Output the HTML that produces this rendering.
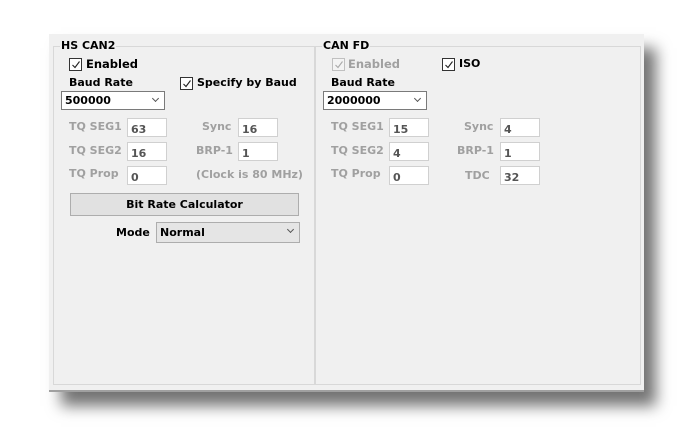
<!DOCTYPE html>
<html><head><style>
body{margin:0;width:682px;height:434px;background:#fff;position:relative;overflow:hidden;font-family:"DejaVu Sans","Liberation Sans",sans-serif;font-weight:bold;font-size:11px;color:#000}
.a{position:absolute;white-space:nowrap}
#panel{position:absolute;left:49px;top:34px;width:595px;height:356px;background:#f0f0f0;border-bottom:2px solid #a0a0a0;box-shadow:12px 14px 14px rgba(0,0,0,.55)}
.grp{position:absolute;border:1px solid #d8d8d8}
.lbl{background:#f0f0f0;padding:0 1px}
.cb{position:absolute;width:11px;height:11px;border:1px solid #333;background:#fff}
.cb svg{position:absolute;left:1px;top:1px}
.sel{position:absolute;background:#fff;border:1px solid #7a7a7a;box-sizing:border-box;padding-left:3px;line-height:17px}
.sel:after{content:"";position:absolute;right:6px;top:4px;width:4px;height:4px;border-right:1px solid #555;border-bottom:1px solid #555;transform:rotate(45deg)}
.in{position:absolute;width:40px;height:19px;background:#fff;border:1px solid #d0d0d0;box-sizing:border-box;padding-left:3px;line-height:19px;color:#555;padding-top:1px}
.g{color:#a0a0a0}
</style></head><body>
<div id="panel"></div>
<div class="grp" style="left:53px;top:46px;width:260px;height:337px"></div>
<div class="grp" style="left:315px;top:46px;width:324px;height:337px"></div>
<div class="a lbl" style="left:60px;top:39px">HS CAN2</div>
<div class="a lbl" style="left:322px;top:39px">CAN FD</div>

<div class="cb" style="left:69px;top:58px"><svg width="10" height="10"><path d="M1.5 5 L4 7.5 L8.5 1.5" stroke="#222" fill="none" stroke-width="1.1"/></svg></div>
<div class="a" style="left:86px;top:57px;font-size:11.5px">Enabled</div>
<div class="a" style="left:69px;top:76px">Baud Rate</div>
<div class="cb" style="left:180px;top:77px"><svg width="10" height="10"><path d="M1.5 5 L4 7.5 L8.5 1.5" stroke="#222" fill="none" stroke-width="1.1"/></svg></div>
<div class="a" style="left:197px;top:76px">Specify by Baud</div>
<div class="sel" style="left:61px;top:91px;width:104px;height:19px">500000</div>

<div class="a g" style="left:69px;top:120px">TQ SEG1</div>
<div class="a g" style="left:69px;top:144px">TQ SEG2</div>
<div class="a g" style="left:69px;top:167px">TQ Prop</div>
<div class="in" style="left:127px;top:118px">63</div>
<div class="in" style="left:127px;top:142px">16</div>
<div class="in" style="left:127px;top:166px">0</div>
<div class="a g" style="left:202px;top:120px">Sync</div>
<div class="a g" style="left:196px;top:144px">BRP-1</div>
<div class="in" style="left:238px;top:118px">16</div>
<div class="in" style="left:238px;top:142px">1</div>
<div class="a g" style="left:196px;top:168px">(Clock is 80 MHz)</div>
<div class="a" style="left:70px;top:193px;width:227px;height:21px;background:#e1e1e1;border:1px solid #adadad;text-align:center;line-height:21px">Bit Rate Calculator</div>
<div class="a" style="left:116px;top:226px">Mode</div>
<div class="sel" style="left:156px;top:222px;width:144px;height:21px;border-color:#adadad;background:#e5e5e5;line-height:20px">Normal</div>

<div class="cb" style="left:332px;top:58px;border-color:#c0c0c0;background:#f4f4f4"><svg width="10" height="10"><path d="M1.5 5 L4 7.5 L8.5 1.5" stroke="#aaa" fill="none" stroke-width="1.1"/></svg></div>
<div class="a g" style="left:348px;top:57px;font-size:11.5px">Enabled</div>
<div class="cb" style="left:442px;top:58px"><svg width="10" height="10"><path d="M1.5 5 L4 7.5 L8.5 1.5" stroke="#222" fill="none" stroke-width="1.1"/></svg></div>
<div class="a" style="left:459px;top:57px">ISO</div>
<div class="a" style="left:331px;top:76px">Baud Rate</div>
<div class="sel" style="left:323px;top:91px;width:104px;height:19px">2000000</div>

<div class="a g" style="left:331px;top:120px">TQ SEG1</div>
<div class="a g" style="left:331px;top:144px">TQ SEG2</div>
<div class="a g" style="left:331px;top:167px">TQ Prop</div>
<div class="in" style="left:389px;top:118px">15</div>
<div class="in" style="left:389px;top:142px">4</div>
<div class="in" style="left:389px;top:166px">0</div>
<div class="a g" style="left:464px;top:120px">Sync</div>
<div class="a g" style="left:457px;top:144px">BRP-1</div>
<div class="a g" style="left:465px;top:169px">TDC</div>
<div class="in" style="left:500px;top:118px">4</div>
<div class="in" style="left:500px;top:142px">1</div>
<div class="in" style="left:500px;top:166px">32</div>
</body></html>
